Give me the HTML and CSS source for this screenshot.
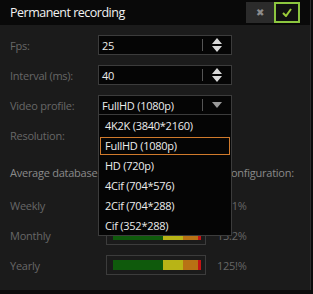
FILE: index.html
```html
<!DOCTYPE html>
<html lang="en">
  <head>
    <meta charset="UTF-8" />
    <title>Permanent recording</title>
    <link rel="stylesheet" href="styles.css">
  </head>
  <body>
    <div class="panel">
      <div class="header">
        <span class="title">Permanent recording</span>
        <div class="actions">
          <button class="btn btn-cancel">&#10006;</button>
          <button class="btn btn-ok">
            <svg width="10" height="9" viewBox="0 0 10 9"><path d="M1 5 L4 8 L9 1" fill="none" stroke="#9ccc3a" stroke-width="2"/></svg>
          </button>
        </div>
      </div>

      <div class="form">
        <div class="row">
          <label>Fps:</label>
          <div class="field">
            <span class="value">25</span>
            <span class="sep"></span>
            <span class="spin">
              <svg width="10" height="14" viewBox="0 0 10 14"><path d="M5 0 L10 6 L0 6 Z M0 8 L10 8 L5 14 Z" fill="#d8d8d8"/></svg>
            </span>
          </div>
        </div>
        <div class="row">
          <label>Interval (ms):</label>
          <div class="field">
            <span class="value">40</span>
            <span class="sep"></span>
            <span class="spin">
              <svg width="10" height="14" viewBox="0 0 10 14"><path d="M5 0 L10 6 L0 6 Z M0 8 L10 8 L5 14 Z" fill="#d8d8d8"/></svg>
            </span>
          </div>
        </div>
        <div class="row">
          <label>Video profile:</label>
          <div class="field">
            <span class="value">FullHD (1080p)</span>
            <span class="sep"></span>
            <span class="spin">
              <svg width="10" height="6" viewBox="0 0 10 6"><path d="M0 0 L10 0 L5 6 Z" fill="#9a9a9a"/></svg>
            </span>
          </div>
          <ul class="dropdown">
            <li>4K2K (3840*2160)</li>
            <li class="active">FullHD (1080p)</li>
            <li>HD (720p)</li>
            <li>4Cif (704*576)</li>
            <li>2Cif (704*288)</li>
            <li>Cif (352*288)</li>
          </ul>
        </div>
        <div class="row">
          <label>Resolution:</label>
          <span class="plain">1920*1080</span>
        </div>

        <div class="subtitle">Average database size for current recording configuration:</div>

        <div class="stat">
          <label>Weekly</label>
          <div class="meter"><div class="bar"></div></div>
          <span class="pct">12.1%</span>
        </div>
        <div class="stat">
          <label>Monthly</label>
          <div class="meter"><div class="bar"></div></div>
          <span class="pct">13.2%</span>
        </div>
        <div class="stat stat-last">
          <label>Yearly</label>
          <div class="meter"><div class="bar"></div></div>
          <span class="pct">125!%</span>
        </div>
      </div>
    </div>
  </body>
</html>
```

FILE: styles.css
```css
/* General */
body {
  margin: 0;
  background-color: #0c0c0c;
  font-family: "Open Sans", "Noto Sans", sans-serif;
  font-size: 11px;
  letter-spacing: -0.25px;
}

.panel {
  width: 310px;
  height: 290px;
  background-color: #1b1b1b;
  border-right: 1px solid #2e2e2e;
  overflow: hidden;
}

/* Header */
.header {
  height: 25px;
  background-color: #090909;
  display: flex;
  align-items: center;
  justify-content: space-between;
  padding: 0 10px;
}

.title {
  color: #f2f2f2;
  font-size: 12.5px;
  letter-spacing: -0.5px;
}

.actions {
  display: flex;
  height: 21px;
  margin-top: -1px;
}

.btn {
  width: 27px;
  height: 21px;
  padding: 0;
  border: none;
  display: flex;
  align-items: center;
  justify-content: center;
}

.btn-cancel {
  background-color: #2b2b2b;
  color: #8c8c8c;
  font-size: 10px;
  width: 28px;
}

.btn-ok {
  background-color: #111;
  border: 2px solid #8cc63f;
  width: 26px;
}

/* Form */
.form {
  padding: 10px 10px 0;
}

.row {
  position: relative;
  display: flex;
  align-items: center;
  height: 20px;
  margin-bottom: 10px;
}

label {
  width: 88px;
  color: #676767;
}

.field {
  width: 132px;
  height: 18px;
  background-color: #050505;
  border: 1px solid #3c3c3c;
  display: flex;
  align-items: center;
}

.value {
  flex: 1;
  color: #ececec;
  padding-left: 3px;
}

.sep {
  width: 1px;
  height: 12px;
  background-color: #555;
}

.spin {
  width: 28px;
  display: flex;
  justify-content: center;
}

.plain {
  color: #676767;
}

/* Dropdown list */
.dropdown {
  position: absolute;
  top: 19px;
  left: 88px;
  width: 132px;
  margin: 0;
  padding: 2px 0 0;
  list-style: none;
  background-color: #050505;
  border: 1px solid #3c3c3c;
  z-index: 2;
}

.dropdown li {
  box-sizing: border-box;
  height: 18px;
  line-height: 16px;
  margin: 0 1px 2px 1px;
  padding-left: 4px;
  color: #ececec;
  border: 1px solid transparent;
}

.dropdown li:last-child {
  margin-bottom: 0;
}

.dropdown li.active {
  border-color: #d07a2c;
}

.subtitle {
  color: #8a8a8a;
  line-height: 15px;
  white-space: nowrap;
  margin-top: 20px;
  margin-bottom: 15px;
}

/* Stats */
.stat {
  display: flex;
  align-items: center;
  height: 20px;
  margin-bottom: 10px;
}

.stat-last {
  margin-top: 3px;
}

.stat label {
  width: 96px;
}

.meter {
  width: 92px;
  height: 18px;
  border: 1px solid #3c3c3c;
  display: flex;
  align-items: center;
  padding-left: 6px;
}

.bar {
  width: 88px;
  height: 10px;
  background: linear-gradient(to right,
    #0f5a0c 0, #0f5a0c 50px,
    #b8b416 50px, #b8b416 70px,
    #b87214 70px, #b87214 85px,
    #c41414 85px);
}

.pct {
  margin-left: 11px;
  color: #676767;
}
```
